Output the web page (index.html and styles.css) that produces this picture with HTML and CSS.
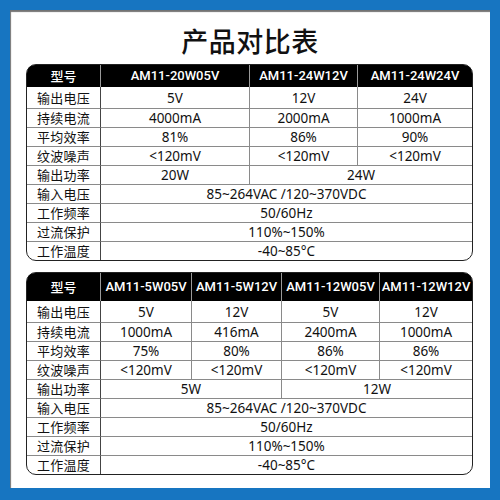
FILE: index.html
```html
<!DOCTYPE html>
<html lang="zh">
<head>
<meta charset="utf-8">
<link rel="stylesheet" href="styles.css">
</head>
<body>
<div class="panel">
  <h1 class="title">产品对比表</h1>

  <table class="spec spec-a">
    <colgroup>
      <col class="c-label"><col style="width:149px"><col style="width:108px"><col>
    </colgroup>
    <thead>
      <tr><th>型号</th><th>AM11-20W05V</th><th>AM11-24W12V</th><th>AM11-24W24V</th></tr>
    </thead>
    <tbody>
      <tr class="first"><td class="lbl">输出电压</td><td>5V</td><td>12V</td><td>24V</td></tr>
      <tr><td class="lbl">持续电流</td><td>4000mA</td><td>2000mA</td><td>1000mA</td></tr>
      <tr><td class="lbl">平均效率</td><td>81%</td><td>86%</td><td>90%</td></tr>
      <tr><td class="lbl">纹波噪声</td><td>&lt;120mV</td><td>&lt;120mV</td><td>&lt;120mV</td></tr>
      <tr><td class="lbl">输出功率</td><td>20W</td><td colspan="2">24W</td></tr>
      <tr><td class="lbl">输入电压</td><td colspan="3">85~264VAC /120~370VDC</td></tr>
      <tr><td class="lbl">工作频率</td><td colspan="3">50/60Hz</td></tr>
      <tr><td class="lbl">过流保护</td><td colspan="3">110%~150%</td></tr>
      <tr><td class="lbl">工作温度</td><td colspan="3">-40~85°C</td></tr>
    </tbody>
  </table>

  <table class="spec spec-b">
    <colgroup>
      <col class="c-label"><col style="width:91px"><col style="width:90px"><col style="width:98px"><col>
    </colgroup>
    <thead>
      <tr><th>型号</th><th>AM11-5W05V</th><th>AM11-5W12V</th><th>AM11-12W05V</th><th>AM11-12W12V</th></tr>
    </thead>
    <tbody>
      <tr class="first"><td class="lbl">输出电压</td><td>5V</td><td>12V</td><td>5V</td><td>12V</td></tr>
      <tr><td class="lbl">持续电流</td><td>1000mA</td><td>416mA</td><td>2400mA</td><td>1000mA</td></tr>
      <tr><td class="lbl">平均效率</td><td>75%</td><td>80%</td><td>86%</td><td>86%</td></tr>
      <tr><td class="lbl">纹波噪声</td><td>&lt;120mV</td><td>&lt;120mV</td><td>&lt;120mV</td><td>&lt;120mV</td></tr>
      <tr><td class="lbl">输出功率</td><td colspan="2">5W</td><td colspan="2">12W</td></tr>
      <tr><td class="lbl">输入电压</td><td colspan="4">85~264VAC /120~370VDC</td></tr>
      <tr><td class="lbl">工作频率</td><td colspan="4">50/60Hz</td></tr>
      <tr><td class="lbl">过流保护</td><td colspan="4">110%~150%</td></tr>
      <tr><td class="lbl">工作温度</td><td colspan="4">-40~85°C</td></tr>
    </tbody>
  </table>
</div>
</body>
</html>
```

FILE: styles.css
```css
html, body {
  margin: 0;
  padding: 0;
}
body {
  background: #1775c1;
  width: 500px;
  height: 500px;
  overflow: hidden;
  font-family: "Noto Sans", "Noto Sans CJK SC", sans-serif;
  color: #111;
}
.panel {
  margin: 10px 0 0 10px;
  width: 480px;
  height: 478px;
  background: #fff;
  box-shadow: inset 1px 2px 1px rgba(0, 0, 0, 0.55);
  box-sizing: border-box;
  padding-top: 15px;
  display: flex;
  flex-direction: column;
  align-items: center;
}
.title {
  margin: 0;
  font-family: "Noto Sans CJK SC", sans-serif;
  font-size: 27px;
  line-height: 32px;
  font-weight: 500;
  letter-spacing: 0.5px;
  color: #111;
}
.spec {
  width: 447px;
  margin-left: 0;
  table-layout: fixed;
  border-collapse: separate;
  border-spacing: 0;
  border: 1.5px solid #222;
  border-radius: 10px;
  font-size: 13.5px;
  text-align: center;
  position: relative;
  left: -0.5px;
}
.spec-a {
  margin-top: 7px;
}
.spec-b {
  margin-top: 11px;
}
.c-label {
  width: 74px;
}
.spec th,
.spec td {
  padding: 0;
  white-space: nowrap;
  border-right: 1px solid #8a8a8a;
  border-bottom: 1px solid #8a8a8a;
  line-height: 18px;
  height: 18px;
}
.spec th:last-child,
.spec td:last-child {
  border-right: 0;
}
.spec tbody tr:last-child td {
  border-bottom: 0;
}
.spec th {
  background: #000;
  color: #fff;
  font-family: Roboto, "Noto Sans", sans-serif;
  font-weight: 500;
  font-size: 13px;
  border-bottom: 0;
  border-right-color: #9a9a9a;
}
.spec-a th {
  height: 22px;
}
.spec-b th {
  height: 28px;
}
.spec th:first-child {
  border-top-left-radius: 8px;
  font-family: "Noto Sans CJK SC", sans-serif;
  font-size: 13px;
}
.spec th:last-child {
  border-top-right-radius: 8px;
}
.spec tr.first td {
  height: 21px;
}
.spec td.lbl {
  font-family: "Noto Sans CJK SC", sans-serif;
  font-size: 13px;
  border-right-color: #444;
  letter-spacing: 0.3px;
}
```
